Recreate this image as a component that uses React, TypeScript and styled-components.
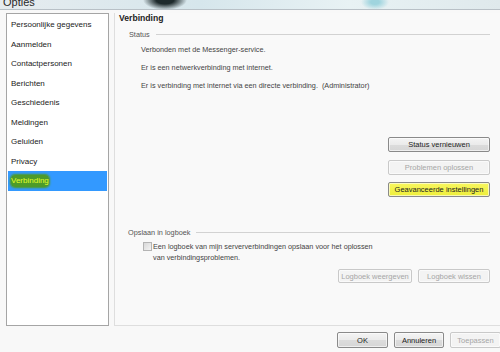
import styled, { createGlobalStyle } from "styled-components";

const menu = [
  "Persoonlijke gegevens",
  "Aanmelden",
  "Contactpersonen",
  "Berichten",
  "Geschiedenis",
  "Meldingen",
  "Geluiden",
  "Privacy",
  "Verbinding",
];

const App = () => {
  return (
    <Window>
      <GlobalStyle />
      <TitleBar>
        <TitleText>Opties</TitleText>
      </TitleBar>
      <Body>
        <Sidebar>
          {menu.map((m) => (
            <Item key={m} $active={m === "Verbinding"}>
              {m === "Verbinding" ? <Marked>{m}</Marked> : m}
            </Item>
          ))}
        </Sidebar>
        <Panel>
          <PanelTitle>Verbinding</PanelTitle>
          <Group>
            <GroupLabel>
              <span>Status</span>
              <Rule />
            </GroupLabel>
            <Lines>
              <Line>Verbonden met de Messenger-service.</Line>
              <Line>Er is een netwerkverbinding met internet.</Line>
              <Line>
                Er is verbinding met internet via een directe verbinding.&nbsp;
                (Administrator)
              </Line>
            </Lines>
          </Group>
          <ButtonStack>
            <Button $w={102}>Status vernieuwen</Button>
            <Button $w={102} disabled>
              Problemen oplossen
            </Button>
            <Button $w={102} $marked>
              Geavanceerde instellingen
            </Button>
          </ButtonStack>
          <LogGroup>
            <GroupLabel>
              <span>Opslaan in logboek</span>
              <Rule />
            </GroupLabel>
            <CheckRow>
              <Check />
              <CheckText>
                Een logboek van mijn serververbindingen opslaan voor het oplossen
                <br />
                van verbindingsproblemen.
              </CheckText>
            </CheckRow>
            <LogButtons>
              <Button $w={74} $h={14} disabled>
                Logboek weergeven
              </Button>
              <Button $w={72} $h={14} disabled>
                Logboek wissen
              </Button>
            </LogButtons>
          </LogGroup>
        </Panel>
      </Body>
      <Footer>
        <Button $w={51} $h={16}>OK</Button>
        <Button $w={50} $h={16}>Annuleren</Button>
        <Button $w={51} $h={16} disabled>
          Toepassen
        </Button>
      </Footer>
    </Window>
  );
};

export default App;

const GlobalStyle = createGlobalStyle`
  body {
    margin: 0;
    background: #f8f8f8;
    font-family: "Liberation Sans", Arial, sans-serif;
  }
`;

const Window = styled.div`
  width: 500px;
  height: 352px;
  overflow: hidden;
  display: flex;
  flex-direction: column;
  background: #f8f8f8;
  color: #333;
  font-size: 8px;
`;

const TitleBar = styled.div`
  height: 9px;
  flex-shrink: 0;
  overflow: hidden;
  border-bottom: 1px solid #b8c0c6;
  background:
    radial-gradient(ellipse 22px 10px at 165px 0px, #1e2a2c 40%, rgba(40, 60, 60, 0) 100%),
    radial-gradient(ellipse 14px 8px at 375px 2px, #9fd4de 30%, rgba(160, 210, 220, 0) 100%),
    linear-gradient(90deg, #e6ecef 0%, #d6e6ec 40%, #e8f2f4 70%, #dfe9ec 100%);
`;

const TitleText = styled.div`
  font-family: "Liberation Sans", Arial, sans-serif;
  font-size: 11px;
  line-height: 11px;
  color: #2a2a2a;
  padding-left: 3px;
  margin-top: -3px;
`;

const Body = styled.div`
  display: flex;
  padding: 3px 0 0 6px;
  border-left: 2px solid #b2b6b9;
  margin-left: -2px;
  height: 312px;
  flex-shrink: 0;
`;

const Sidebar = styled.div`
  width: 99px;
  height: 310px;
  border: 1px solid #a5a5a5;
  background: #fff;
  padding: 1px 1px 0 1px;
`;

const Item = styled.div<{ $active?: boolean }>`
  height: 19.5px;
  line-height: 19.5px;
  padding-left: 3px;
  font-size: 8px;
  color: #222;
  white-space: nowrap;
  background: ${(p) => (p.$active ? "#3399ff" : "transparent")};
`;

const Marked = styled.span`
  color: #e4ff2c;
  background: #4d9b2a;
  border-radius: 4px;
  padding: 1px 0 2px;
  box-shadow: 0 0 2px 1px #4d9b2a;
`;

const Panel = styled.div`
  flex: 1;
  margin-left: 5px;
  height: 312px;
  border-left: 1px solid #dedede;
  border-bottom: 1px solid #dedede;
  background: #f9f9f9;
  padding-right: 10px;
  display: flex;
  flex-direction: column;
`;

const PanelTitle = styled.div`
  height: 10px;
  line-height: 10px;
  padding: 0 0 0 4px;
  font-weight: bold;
  font-size: 8.6px;
  color: #222;
`;

const Group = styled.div`
  margin: 6px 0 0 14px;
`;

const GroupLabel = styled.div`
  height: 10px;
  display: flex;
  align-items: center;
  gap: 6px;
  color: #555;
  font-size: 7.3px;
`;

const Rule = styled.div`
  flex: 1;
  height: 1px;
  background: #d2d2d2;
`;

const Lines = styled.div`
  margin-top: 2px;
  padding-left: 12px;
`;

const Line = styled.div`
  height: 18px;
  line-height: 18px;
  color: #444;
  font-size: 7.25px;
`;

const ButtonStack = styled.div`
  margin-top: 42px;
  display: flex;
  flex-direction: column;
  align-items: flex-end;
  gap: 7.5px;
`;

const Button = styled.button<{ $w: number; $h?: number; $marked?: boolean }>`
  width: ${(p) => p.$w}px;
  height: ${(p) => p.$h ?? 15}px;
  padding: 0;
  font-family: "Liberation Sans", Arial, sans-serif;
  font-size: 7.5px;
  color: #222;
  border: 1px solid #8a8a8a;
  border-radius: 2px;
  background: ${(p) =>
    p.$marked
      ? "linear-gradient(#f8f760, #eeee3a)"
      : "linear-gradient(#f4f4f4 0%, #ebebeb 50%, #dcdcdc 51%, #d6d6d6 100%)"};
  box-shadow: inset 0 0 0 1px rgba(255, 255, 255, 0.6);

  &:disabled {
    color: #a6a6a6;
    border-color: #c9c9c9;
    background: #f3f3f3;
  }
`;

const LogGroup = styled.div`
  margin: 30px 0 0 13px;
`;

const CheckRow = styled.div`
  display: flex;
  align-items: flex-start;
  gap: 1px;
  margin-top: 4px;
  padding-left: 15px;
`;

const Check = styled.div`
  width: 7px;
  height: 7px;
  margin-top: 1px;
  border: 1px solid #b4b4b4;
  background: linear-gradient(135deg, #d8d8d8, #f4f4f4);
`;

const CheckText = styled.div`
  line-height: 11px;
  color: #444;
  font-size: 7.25px;
`;

const LogButtons = styled.div`
  margin-top: 6px;
  display: flex;
  justify-content: flex-end;
  gap: 6px;
`;

const Footer = styled.div`
  display: flex;
  justify-content: flex-end;
  gap: 6px;
  padding: 7px 0 0;
  margin-right: -1px;
`;
